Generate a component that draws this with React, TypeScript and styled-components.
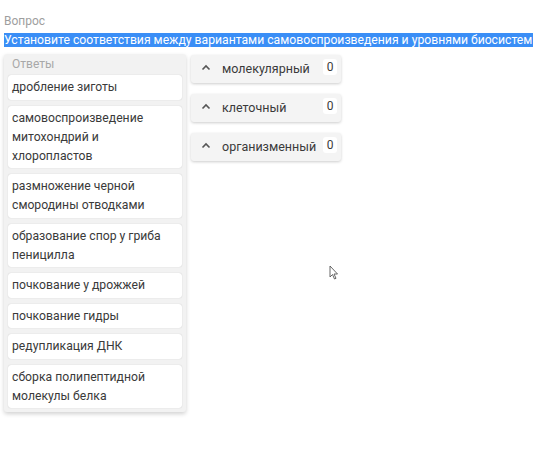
import styled, { createGlobalStyle } from "styled-components";

const GlobalStyle = createGlobalStyle`
  body {
    margin: 0;
    background: #ffffff;
    font-family: Roboto, "Noto Sans", Arial, sans-serif;
  }
`;

const Page = styled.div`
  position: relative;
  width: 546px;
  height: 455px;
  padding: 14px 4px 0;
  box-sizing: border-box;
`;

const Label = styled.div`
  font-size: 12px;
  line-height: 15px;
  color: #9e9e9e;
`;

const Question = styled.div`
  margin-top: 3px;
  font-size: 12.2px;
  line-height: 17px;
  white-space: nowrap;
  span {
    background: #3a8ef6;
    color: #ffffff;
    padding-right: 1px;
  }
`;

const Board = styled.div`
  display: flex;
  align-items: flex-start;
  gap: 5px;
  margin-top: 5px;
`;

const Answers = styled.div`
  width: 182px;
  box-sizing: border-box;
  background: #f2f2f2;
  border-radius: 3px;
  padding: 1px 4px 4px;
  display: flex;
  flex-direction: column;
  gap: 6px;
  box-shadow: 0 2px 4px rgba(0, 0, 0, 0.18);
`;

const AnswersTitle = styled.div`
  font-size: 12px;
  line-height: 18px;
  color: #a8a8a8;
  padding-left: 4px;
  margin-bottom: -4px;
`;

const Card = styled.div`
  background: #ffffff;
  border-radius: 3px;
  box-shadow: 0 0 1px rgba(0, 0, 0, 0.25);
  padding: 3px 4px 2.5px;
  font-size: 12.2px;
  line-height: 19px;
  color: #3a3a3a;
`;

const Levels = styled.div`
  display: flex;
  flex-direction: column;
  gap: 11px;
  margin-top: 1px;
`;

const Level = styled.div`
  width: 150px;
  height: 28px;
  box-sizing: border-box;
  background: #f4f4f4;
  border-radius: 3px;
  box-shadow: 0 1px 3px rgba(0, 0, 0, 0.2);
  display: flex;
  align-items: flex-start;
  padding: 0 4px 0 10px;
`;

const Chevron = styled.svg`
  margin-top: 9px;
  flex: none;
`;

const LevelName = styled.div`
  flex: 1;
  margin-left: 11px;
  font-size: 12.5px;
  line-height: 28px;
  color: #3a3a3a;
`;

const Count = styled.div`
  margin-top: 4px;
  min-width: 14px;
  height: 16px;
  background: #ffffff;
  border-radius: 3px;
  font-size: 12px;
  line-height: 16px;
  text-align: center;
  color: #3a3a3a;
`;

const Pointer = styled.svg`
  position: absolute;
  left: 329px;
  top: 265px;
`;

const answers = [
  "дробление зиготы",
  "самовоспроизведение митохондрий и хлоропластов",
  "размножение черной смородины отводками",
  "образование спор у гриба пеницилла",
  "почкование у дрожжей",
  "почкование гидры",
  "редупликация ДНК",
  "сборка полипептидной молекулы белка",
];

const levels = ["молекулярный", "клеточный", "организменный"];

export default function App() {
  return (
    <Page>
      <GlobalStyle />
      <Label>Вопрос</Label>
      <Question>
        <span>Установите соответствия между вариантами самовоспроизведения и уровнями биосистем</span>
      </Question>
      <Board>
        <Answers>
          <AnswersTitle>Ответы</AnswersTitle>
          {answers.map((a) => (
            <Card key={a}>{a}</Card>
          ))}
        </Answers>
        <Levels>
          {levels.map((l) => (
            <Level key={l}>
              <Chevron width="10" height="7" viewBox="0 0 10 7">
                <path d="M1.5 5.5 L5 2 L8.5 5.5" fill="none" stroke="#555" strokeWidth="1.6" />
              </Chevron>
              <LevelName>{l}</LevelName>
              <Count>0</Count>
            </Level>
          ))}
        </Levels>
      </Board>
      <Pointer width="10" height="15" viewBox="0 0 10 15">
        <path d="M1 1 L1 12 L3.5 9.5 L5.5 14 L7 13.3 L5 9 L8.5 9 Z" fill="#fff" stroke="#555" strokeWidth="0.9" />
      </Pointer>
    </Page>
  );
}
